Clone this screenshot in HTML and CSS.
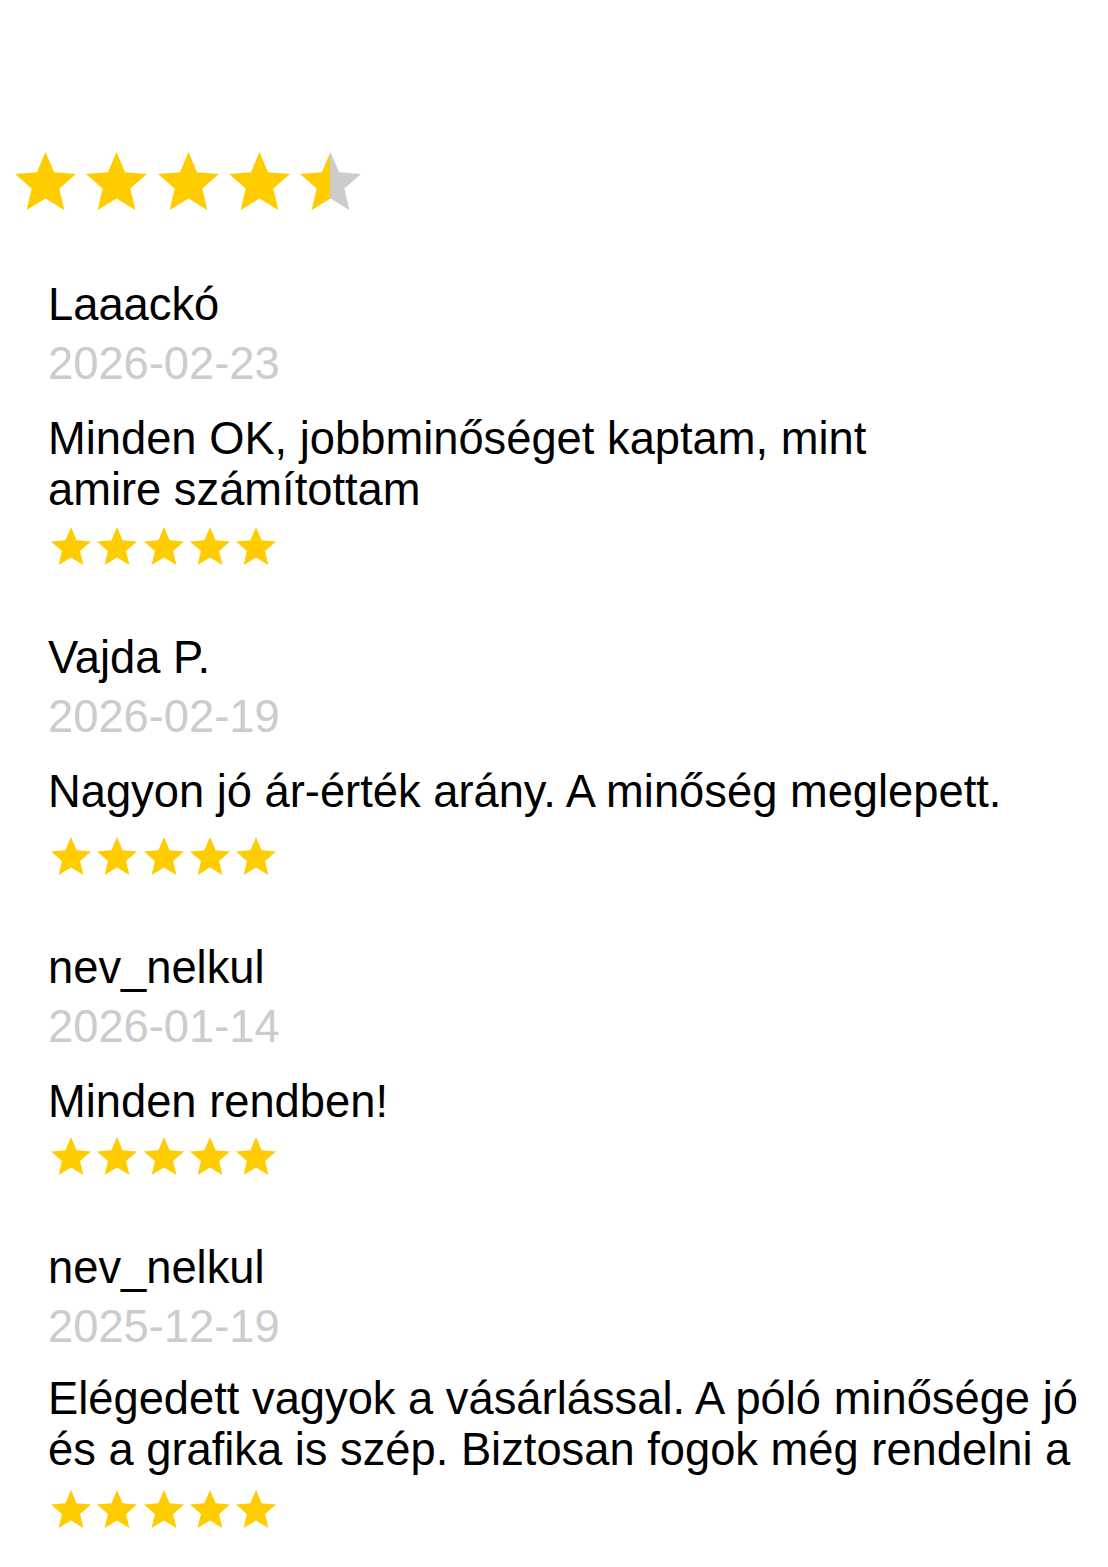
FILE: index.html
```html
<!DOCTYPE html>
<html lang="hu">
<head>
    <meta charset="UTF-8">
    <meta name="viewport" content="width=device-width, initial-scale=1.0">
    <title>Vélemények</title>
    <link rel="stylesheet" href="styles.css">
</head>
<body>
    <svg class="defs" width="0" height="0" aria-hidden="true">
        <defs>
            <linearGradient id="halfFill" x1="0" x2="1" y1="0" y2="0">
                <stop offset="50%" stop-color="#ffcc00"/>
                <stop offset="50%" stop-color="#cccccc"/>
            </linearGradient>
            <symbol id="star" viewBox="2 2 20 19">
                <path d="M12 17.27L18.18 21l-1.64-7.03L22 9.24l-7.19-.61L12 2 9.19 8.63 2 9.24l5.46 4.73L5.82 21z"/>
            </symbol>
        </defs>
    </svg>

    <div class="summary">
        <svg class="star-big"><use href="#star"/></svg>
        <svg class="star-big"><use href="#star"/></svg>
        <svg class="star-big"><use href="#star"/></svg>
        <svg class="star-big"><use href="#star"/></svg>
        <svg class="star-big half"><use href="#star"/></svg>
    </div>

    <div class="reviews">
        <div class="review">
            <div class="name">Laaackó</div>
            <div class="date">2026-02-23</div>
            <div class="comment">Minden OK, jobbminőséget kaptam, mint<br>amire számítottam</div>
            <div class="stars">
                <svg><use href="#star"/></svg>
                <svg><use href="#star"/></svg>
                <svg><use href="#star"/></svg>
                <svg><use href="#star"/></svg>
                <svg><use href="#star"/></svg>
            </div>
        </div>

        <div class="review">
            <div class="name">Vajda P.</div>
            <div class="date">2026-02-19</div>
            <div class="comment">Nagyon jó ár-érték arány. A minőség meglepett.</div>
            <div class="stars loose">
                <svg><use href="#star"/></svg>
                <svg><use href="#star"/></svg>
                <svg><use href="#star"/></svg>
                <svg><use href="#star"/></svg>
                <svg><use href="#star"/></svg>
            </div>
        </div>

        <div class="review">
            <div class="name">nev_nelkul</div>
            <div class="date">2026-01-14</div>
            <div class="comment">Minden rendben!</div>
            <div class="stars tight">
                <svg><use href="#star"/></svg>
                <svg><use href="#star"/></svg>
                <svg><use href="#star"/></svg>
                <svg><use href="#star"/></svg>
                <svg><use href="#star"/></svg>
            </div>
        </div>

        <div class="review">
            <div class="name">nev_nelkul</div>
            <div class="date">2025-12-19</div>
            <div class="comment long">Elégedett vagyok a vásárlással. A póló minősége jó és a grafika is szép. Biztosan fogok még rendelni a jövőben is, köszönöm!</div>
            <div class="stars">
                <svg><use href="#star"/></svg>
                <svg><use href="#star"/></svg>
                <svg><use href="#star"/></svg>
                <svg><use href="#star"/></svg>
                <svg><use href="#star"/></svg>
            </div>
        </div>
    </div>
</body>
</html>
```

FILE: styles.css
```css
body {
    margin: 0;
    font-family: "Liberation Sans", Arial, sans-serif;
    color: #000;
    background: #fff;
    overflow-x: hidden;
}
.defs {
    position: absolute;
}
.summary {
    display: flex;
    gap: 10.3px;
    padding: 152px 0 0 15px;
}
.star-big {
    width: 61px;
    height: 58px;
    fill: #ffcc00;
}
.star-big.half {
    fill: url(#halfFill);
}
.reviews {
    padding: 65px 0 0 48px;
}
.review {
    margin-bottom: 63px;
}
.name {
    font-size: 45.3px;
    line-height: 60px;
}
.date {
    font-size: 45.3px;
    line-height: 57px;
    color: #cccccc;
}
.comment {
    font-size: 45.3px;
    line-height: 51px;
    margin-top: 20.5px;
}
/* hosszu velemeny: csak ket sor latszik */
.comment.long {
    width: 1080px;
    max-height: 102px;
    overflow: hidden;
    margin-top: 17.5px;
}
.stars {
    display: flex;
    gap: 6.3px;
    margin: 12.5px 0 0 3px;
}
.stars.loose {
    margin-top: 20.5px;
}
.stars.tight {
    margin-top: 10.5px;
}
.long + .stars {
    margin-top: 15.5px;
}
.stars svg {
    width: 40px;
    height: 38px;
    fill: #ffcc00;
}
```
